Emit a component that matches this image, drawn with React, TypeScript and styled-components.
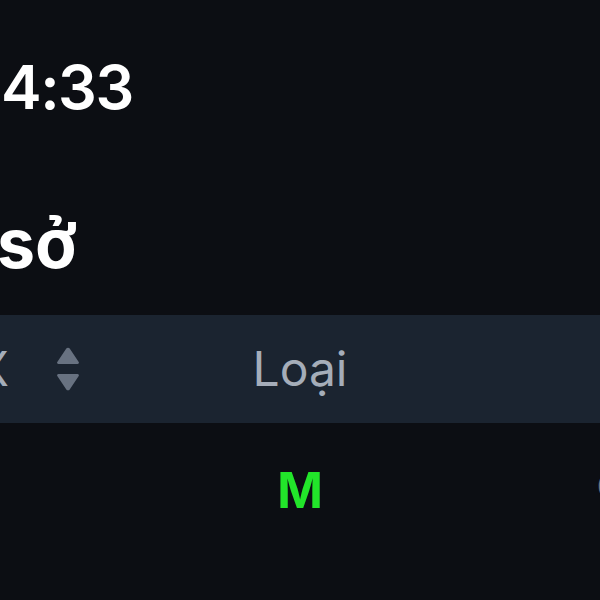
import React from 'react';
import styled, { createGlobalStyle } from 'styled-components';

const GlobalStyle = createGlobalStyle`
  html, body {
    margin: 0;
    padding: 0;
    background: #0c0e13;
  }
`;

const Screen = styled.div`
  width: 600px;
  height: 600px;
  overflow: hidden;
  background: #0c0e13;
  color: #ffffff;
  font-family: Inter, 'Noto Sans', sans-serif;
  display: flex;
  flex-direction: column;
`;

const StatusBar = styled.div`
  height: 150px;
  padding: 57px 0 0 1px;
  box-sizing: border-box;
`;

const Time = styled.span`
  font-size: 61px;
  font-weight: 600;
  line-height: 1;
  letter-spacing: -1.5px;
`;

const Title = styled.h1`
  margin: 59px 0 0 -3px;
  height: 106px;
  font-size: 68px;
  font-weight: 700;
  line-height: 1;
`;

const TableRow = styled.div<{ $header?: boolean }>`
  display: grid;
  grid-template-columns: 150px 400px 1fr;
  align-items: center;
  height: ${(p) => (p.$header ? '108px' : '134px')};
  margin-left: -50px;
  background: ${(p) => (p.$header ? '#1b2430' : 'transparent')};
`;

const SortCell = styled.div`
  display: flex;
  align-items: center;
  justify-content: flex-end;
  gap: 47px;
  padding-right: 20px;
`;

const HeaderText = styled.span`
  font-size: 48px;
  font-weight: 400;
  color: #a5adb9;
  line-height: 1;
`;

const CenterCell = styled.div`
  display: flex;
  justify-content: center;
`;

const Side = styled.span<{ $green?: boolean }>`
  font-size: 49px;
  font-weight: 700;
  line-height: 1;
  color: ${(p) => (p.$green ? '#22e52a' : '#c9ced6')};
`;

const TailCell = styled.div`
  padding-left: 97px;
  font-size: 30px;
  color: #6f7680;
  margin-top: -8px;
`;

const SortIcon = () => (
  <svg width="24" height="44" viewBox="0 0 24 44">
    <path d="M10.3 1.6a2 2 0 0 1 3.4 0l9 13.4a1.3 1.3 0 0 1-1.1 2H2.4a1.3 1.3 0 0 1-1.1-2z" fill="#687281" />
    <path d="M10.3 42.4a2 2 0 0 0 3.4 0l9-13.4a1.3 1.3 0 0 0-1.1-2H2.4a1.3 1.3 0 0 0-1.1 2z" fill="#687281" />
  </svg>
);

export default function App() {
  return (
    <>
      <GlobalStyle />
      <Screen>
        <StatusBar>
          <Time>4:33</Time>
        </StatusBar>
        <Title>sở</Title>
        <TableRow $header>
          <SortCell>
            <HeaderText>X</HeaderText>
            <SortIcon />
          </SortCell>
          <CenterCell>
            <HeaderText>Loại</HeaderText>
          </CenterCell>
          <div />
        </TableRow>
        <TableRow>
          <div />
          <CenterCell>
            <Side $green>M</Side>
          </CenterCell>
          <TailCell>0</TailCell>
        </TableRow>
      </Screen>
    </>
  );
}
